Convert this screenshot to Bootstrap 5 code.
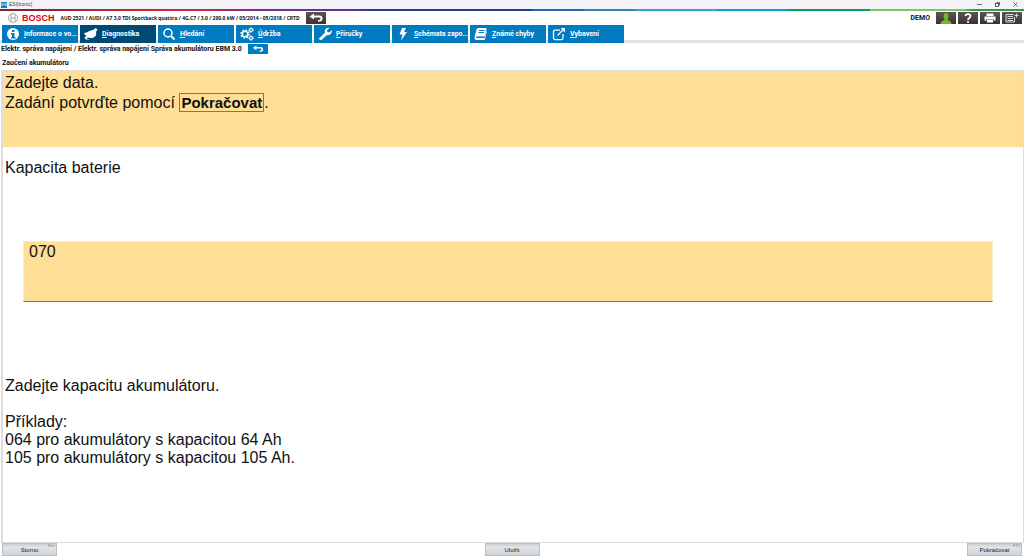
<!DOCTYPE html>
<html lang="cs">
<head>
<meta charset="utf-8">
<meta name="viewport" content="width=device-width, initial-scale=1">
<title>ESI[tronic]</title>
<link href="https://cdn.jsdelivr.net/npm/bootstrap@5.3.0/dist/css/bootstrap.min.css" rel="stylesheet">
<style>
body { font-family: "Liberation Sans", Arial, sans-serif; font-size: 16px; line-height: 18px; color: #111; background: #fff; }
svg { display: block; }
.titlebar { height: 9px; background: #f3f2f7; font-size: 5px; line-height: 9px; color: #444; padding-left: 1px; }
.app-logo { width: 6px; height: 6px; margin-right: 2px; background: #0a84c6; color: #fff; font-size: 4px; line-height: 6px; text-align: center; overflow: hidden; }
.win-btn { border: 0; background: none; padding: 0; width: 18px; height: 9px; display: flex; align-items: center; justify-content: center; }
.stripe { height: 2px; background: linear-gradient(90deg, #8f1d35 0 3%, #b02a3c 10%, #d5212c 13%, #c32a45 20%, #7a2f86 25%, #5b3597 35%, #2b3a8c 36% 52%, #2565ad 52% 57%, #3a86bb 57% 62%, #2fa5d0 62% 70%, #00a3cb 70% 77%, #0a9e66 77% 85%, #7fc36a 85% 94%, #2f9a4c 95%); }
.vehicle { height: 14px; }
.brand { font-size: 9px; line-height: 14px; font-weight: 700; color: #e20015; }
.small-bold { font-family: Roboto, "Liberation Sans", sans-serif; font-size: 7px; font-weight: 700; line-height: 12px; color: #111; white-space: nowrap; }
.vehicle-name { font-family: "Open Sans", "Liberation Sans", sans-serif; font-size: 5px; margin: 0 6px; }
.tool { width: 20px; height: 12px; padding: 0; border: 0; border-radius: 0; display: flex; align-items: center; justify-content: center; background: linear-gradient(#5b5452, #3a3432); }
.tools { gap: 2px; padding-right: 2px; }
.back-blue { background: #007bc0; height: 10px; margin-left: 6px; }
.tabs-row { gap: 2px; height: 18px; padding-left: 2px; background: linear-gradient(#fff 0 15px, #e2e2e2 15px 18px); }
.tab { width: 76px; height: 18px; gap: 4px; padding-left: 4px; background: #007bc0; color: #fff; font-family: Roboto, "Liberation Sans", sans-serif; font-size: 7px; font-weight: 700; text-decoration: none; white-space: nowrap; }
.tab.active { background: #004975; }
.tab:hover { color: #fff; }
.tab svg { flex: 0 0 14px; }
.crumb { height: 12px; padding-left: 1px; }
.step-title { padding: 2px 2px 1px; }
.work { border: 1px solid #ddd; border-width: 1px 1px 1px 2px; margin-left: 1px; }
.notice { background: #ffde96; height: 76px; padding: 2px; line-height: 20px; }
.keycap { border: 1px solid #777; padding: 0 1px; font-size: 15px; }
.form-body { padding: 12px 2px; }
.form-body p { margin-bottom: 18px; }
.entry-wrap { padding: 64px 28px 75px 18px; }
.entry { border: 1px solid #f5ecd5; border-bottom: 1px solid #3f84b5; border-radius: 0; background: #ffde96; padding: 0 5px; height: 61px; font-size: 16px; line-height: 20px; color: #111; resize: none; outline: 0; display: block; width: 100%; }
.foot { height: 14px; padding: 0 2px; }
.cmd { position: relative; width: 55px; height: 13px; padding: 0; border: 1px solid #b9c0c5; border-radius: 0; background: linear-gradient(#c9ced2, #e3e6e8 30%, #d9dde0 60%, #cdd5da); font-size: 6px; line-height: 10px; color: #222; }
.fkey { position: absolute; top: 0; right: 1px; font-size: 4px; line-height: 4px; color: #888; }
</style>
</head>
<body>
<div class="d-flex flex-column vh-100 overflow-hidden">
  <div class="titlebar d-flex align-items-center">
    <span class="app-logo">ESI</span><span>ESI[tronic]</span>
    <div class="d-flex ms-auto">
      <button class="win-btn" aria-label="Minimalizovat"><svg width="5" height="5" viewBox="0 0 5 5"><path d="M0 2.500h5" stroke="#333" stroke-width=".7"/></svg></button>
      <button class="win-btn" aria-label="Obnovit"><svg width="5" height="5" viewBox="0 0 10 10" fill="none" stroke="#333" stroke-width="1.500"><rect x="1" y="3" width="6" height="6"/><path d="M3 1h6v6"/></svg></button>
      <button class="win-btn" aria-label="Zavřít"><svg width="5" height="5" viewBox="0 0 5 5"><path d="M.5.5l4 4M4.500.5l-4 4" stroke="#333" stroke-width=".7"/></svg></button>
    </div>
  </div>
  <div class="stripe"></div>

  <header class="vehicle d-flex align-items-center">
    <svg class="ms-2 me-1" width="10" height="10" viewBox="0 0 20 20" fill="none" stroke="#777" stroke-width="1.300"><circle cx="10" cy="10" r="9"/><path d="M6 3v14M14 3v14M6 10h8"/></svg>
    <span class="brand">BOSCH</span>
    <span class="small-bold vehicle-name">AUD 2521 / AUDI / A7 3.0 TDI Sportback quattro / 4G,C7 / 3.0 / 200.0 kW / 05/2014 - 05/2018 / CRTD</span>
    <button class="tool" aria-label="Zpět"><svg width="14" height="10" viewBox="0 0 28 20"><path d="M1 7L10 1v4h11q6 0 6 6t-6 6h-3v-3h2q3 0 3-2.500T20 9H10v4z" fill="#fff"/></svg></button>
    <div class="tools d-flex align-items-center ms-auto">
      <span class="small-bold me-1">DEMO</span>
      <button class="tool" aria-label="Uživatel"><svg width="12" height="11" viewBox="0 0 24 22" fill="#76b82a"><ellipse cx="12" cy="7" rx="5" ry="7"/><path d="M1 22q0-6 8-8h6q8 2 8 8z"/></svg></button>
      <button class="tool" aria-label="Nápověda"><svg width="8" height="10" viewBox="0 0 16 20" fill="none" stroke="#fff" stroke-width="3.500"><path d="M3 6q0-4 5-4t5 4q0 2-2.500 4T8 14M8 16v3.500"/></svg></button>
      <button class="tool" aria-label="Tisk"><svg width="12" height="10" viewBox="0 0 24 20" fill="#fff"><path d="M5 1h14v5H5zM1 7h22v8h-4v-3H5v3H1zM6 13h12v6H6z"/></svg></button>
      <button class="tool" aria-label="Nový list"><svg width="14" height="10" viewBox="0 0 28 20" fill="none" stroke="#ddd" stroke-width="2"><path d="M19 8v10H2V3h15M5 7h11M5 11h11M5 15h11M23 1v8M19 5h8"/></svg></button>
    </div>
  </header>

  <nav class="tabs-row d-flex" aria-label="Hlavní nabídka">
    <a href="#" class="tab d-flex align-items-center"><svg width="14" height="14" viewBox="0 0 28 28"><circle cx="14" cy="14" r="12" fill="#fff"/><path d="M12 6h5v4h-5zM10 12h7v8h2v3h-9v-3h2v-5h-2z" fill="#007bc0"/></svg><span><u>I</u>nformace o vo...</span></a>
    <a href="#" class="tab active d-flex align-items-center" aria-current="page"><svg width="14" height="14" viewBox="0 0 28 28"><path d="M0 12q6-1 9-3 4-3 9-3l5-4 4 3-3 5q2 8-5 11-5 2-10 0l-4 2q3 2 7 2-9 2-11-3 0-2 4-4-4-2-5-6z" fill="#fff"/></svg><span><u>D</u>iagnostika</span></a>
    <a href="#" class="tab d-flex align-items-center"><svg width="14" height="14" viewBox="0 0 28 28" fill="none" stroke="#fff"><circle cx="12" cy="12" r="8" stroke-width="3"/><path d="M18 18l7 7" stroke-width="4"/></svg><span><u>H</u>ledání</span></a>
    <a href="#" class="tab d-flex align-items-center"><svg width="14" height="14" viewBox="0 0 28 28" fill="none" stroke="#fff"><circle cx="10" cy="14" r="5.500" stroke-width="3"/><circle cx="10" cy="14" r="8" stroke-width="3" stroke-dasharray="3 3.280"/><circle cx="22" cy="6" r="3" stroke-width="2"/><circle cx="22" cy="6" r="4.500" stroke-width="2" stroke-dasharray="2 1.530"/><circle cx="22" cy="22" r="3" stroke-width="2"/><circle cx="22" cy="22" r="4.500" stroke-width="2" stroke-dasharray="2 1.530"/></svg><span><u>Ú</u>držba</span></a>
    <a href="#" class="tab d-flex align-items-center"><svg width="14" height="14" viewBox="0 0 28 28"><path d="M3 22L14 11q-2-6 4-9 3-1 5 0l-5 4 1 4 4 1 4-5q2 5-2 8-3 3-7 2L7 26q-2 1-4-1t0-3z" fill="#fff"/></svg><span><u>P</u>říručky</span></a>
    <a href="#" class="tab d-flex align-items-center"><svg width="14" height="14" viewBox="0 0 28 28"><path d="M12 2h8l-4 8h6L10 27l3-12H7z" fill="#fff"/></svg><span><u>S</u>chémata zapo...</span></a>
    <a href="#" class="tab d-flex align-items-center"><svg width="14" height="14" viewBox="0 0 28 28"><path d="M8 2h16q2 0 1 3l-4 14H5q-2 2 0 3h16l4-14 1 1-4 15q0 2-3 2H4q-4-1-3-6L5 5q1-3 3-3z" fill="#fff"/><path d="M10 7h11M9 11h11" stroke="#007bc0" stroke-width="2"/></svg><span><u>Z</u>námé chyby</span></a>
    <a href="#" class="tab d-flex align-items-center"><svg width="14" height="14" viewBox="0 0 28 28" fill="none" stroke="#fff" stroke-width="2.500"><path d="M16 6H6q-3 0-3 3v13q0 3 3 3h13q3 0 3-3v-8M11 17L24 4"/><path d="M17 2h9v9z" fill="#fff" stroke="none"/></svg><span><u>V</u>ybavení</span></a>
  </nav>

  <div class="d-flex align-items-center crumb">
    <span class="small-bold">Elektr. správa napájení / Elektr. správa napájení Správa akumulátoru EBM 3.0</span>
    <button class="tool back-blue" aria-label="O úroveň výš"><svg width="12" height="8" viewBox="0 0 28 20"><path d="M1 7L10 1v4h11q6 0 6 6t-6 6h-3v-3h2q3 0 3-2.500T20 9H10v4z" fill="#fff"/></svg></button>
  </div>
  <h1 class="small-bold step-title mb-0">Zaučení akumulátoru</h1>

  <main class="work flex-grow-1">
    <div class="notice">Zadejte data.<br>Zadání potvrďte pomocí <strong class="keycap">Pokračovat</strong>.</div>
    <div class="form-body">
      <label for="kapacita" class="d-block">Kapacita baterie</label>
      <div class="entry-wrap"><textarea id="kapacita" class="entry">070</textarea></div>
      <p>Zadejte kapacitu akumulátoru.</p>
      <p class="mb-0">Příklady:<br>064 pro akumulátory s kapacitou 64 Ah<br>105 pro akumulátory s kapacitou 105 Ah.</p>
    </div>
  </main>
  <footer class="foot d-flex justify-content-between">
    <button class="cmd">Storno<span class="fkey">Esc</span></button>
    <button class="cmd">Uložit</button>
    <button class="cmd">Pokračovat<span class="fkey">F12</span></button>
  </footer>
</div>
<script src="https://cdn.jsdelivr.net/npm/bootstrap@5.3.0/dist/js/bootstrap.bundle.min.js"></script>
</body>
</html>
